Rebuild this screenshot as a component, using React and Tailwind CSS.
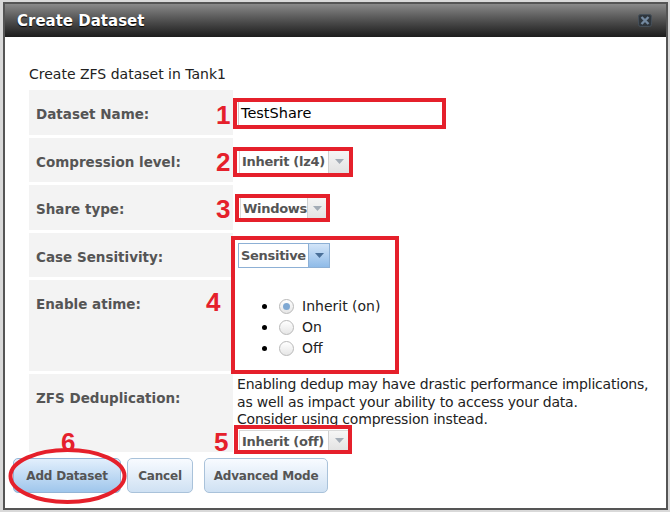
import React from 'react';

// Dropdown drawn the way the old dijit selects look
const Select = ({ value, className, active }) => (
  <div
    className={`flex h-[25px] items-stretch border bg-white ${className} ${
      active ? 'border-[#8db0d5]' : 'border-[#d9d9d9]'
    }`}
  >
    <span className="flex flex-1 items-center whitespace-nowrap pl-[2px] pt-[1px] text-[13px] font-bold tracking-[-0.3px] text-[#555]">
      {value}
    </span>
    <span
      className={`flex w-[21px] shrink-0 items-center justify-center border-l ${
        active
          ? 'border-[#8db0d5] bg-linear-to-b from-[#d3e5f8] to-[#8fbbe8]'
          : 'border-[#d0d0d0] bg-linear-to-b from-[#f6f6f6] to-[#e2e2e2]'
      }`}
    >
      <svg width="9" height="5" viewBox="0 0 9 5">
        <path d="M0 0h9L4.5 5z" fill={active ? '#4a6f98' : '#a3acb6'} />
      </svg>
    </span>
  </div>
);

const Radio = ({ checked }) => (
  <span className="flex h-[15px] w-[15px] items-center justify-center rounded-full border border-[#b9b9b9] bg-linear-to-b from-white to-[#e6e6e6]">
    {checked && <span className="h-[7px] w-[7px] rounded-full bg-[#7fa8d2]" />}
  </span>
);

const Label = ({ children }) => (
  <div className="whitespace-nowrap bg-[#f3f3f3] pl-[7px] pt-[14px] text-[13.5px] font-bold text-[#555]">
    {children}
  </div>
);

const Mark = ({ n, className }) => (
  <span
    className={`absolute text-[26px] font-bold leading-none text-[#e5202b] ${className}`}
    style={{ fontFamily: '"Liberation Sans", Arial, sans-serif' }}
  >
    {n}
  </span>
);

const btn =
  'h-[35px] rounded-[5px] border text-[12px] font-bold tracking-[-0.2px] text-[#555]';

const atimeOptions = [
  ['Inherit (on)', true],
  ['On', false],
  ['Off', false],
];

export default function App() {
  return (
    <div
      className="relative h-[512px] w-[670px] overflow-hidden bg-[#d9d9d9] pl-[3px] pt-[2px]"
      style={{ fontFamily: '"DejaVu Sans", Verdana, sans-serif' }}
    >
      <div className="flex h-[508px] w-[665px] flex-col border-2 border-[#555] bg-white">
        {/* Title bar */}
        <div className="flex h-[33px] shrink-0 items-center justify-between bg-linear-to-b from-[#8a8a8a] to-[#1d1d1d] pl-[12px] pr-[14px]">
          <span className="pt-[1px] text-[15px] font-bold text-white [text-shadow:0_1px_1px_#000]">
            Create Dataset
          </span>
          <svg width="14" height="13" viewBox="0 0 14 13">
            <rect x="0.5" y="0.5" width="13" height="12" rx="2" fill="#2f363d" stroke="#444e58" />
            <path d="M3.5 3l7 7M10.5 3l-7 7" stroke="#7489a0" strokeWidth="2.4" />
          </svg>
        </div>

        {/* Body */}
        <div className="flex flex-1 flex-col px-[8px] pt-[28px]">
          <div className="pl-[16px]">
            <p className="text-[14px] leading-[18px] text-[#222]">Create ZFS dataset in Tank1</p>

            <div className="mt-[7px] grid grid-cols-[204px_1fr] grid-rows-[45px_44px_45px_44px_91px_78px] gap-[3px]">
              <Label>Dataset Name:</Label>
              <div className="flex items-center pl-[2px] pt-[2px]">
                <div className="flex h-[25px] w-[205px] items-center border border-[#ccc] pl-[2px] text-[14.5px] text-black">
                  TestShare
                </div>
              </div>

              <Label>Compression level:</Label>
              <div className="flex items-center pl-[3px] pt-[3px]">
                <Select value="Inherit (lz4)" className="w-[111px]" />
              </div>

              <Label>Share type:</Label>
              <div className="flex items-center pl-[4px] pt-[2px]">
                <Select value="Windows" className="w-[86px]" />
              </div>

              <Label>Case Sensitivity:</Label>
              <div className="flex items-center pl-[2px]">
                <Select value="Sensitive" className="w-[92px]" active />
              </div>

              <Label>Enable atime:</Label>
              <div className="flex flex-col justify-center pl-[26px] pt-[4px] text-[14px] text-[#222]">
                {atimeOptions.map(([t, c]) => (
                  <div key={t} className="flex h-[21px] items-center">
                    <span className="h-[5px] w-[5px] rounded-full bg-black" />
                    <span className="ml-[12px] mr-[8px]">
                      <Radio checked={c} />
                    </span>
                    {t}
                  </div>
                ))}
              </div>

              <Label>ZFS Deduplication:</Label>
              <div className="flex flex-col pl-[1px] pt-[2px]">
                <p className="whitespace-nowrap text-[14px] leading-[17.5px] tracking-[-0.2px] text-[#222]">
                  Enabling dedup may have drastic performance implications,
                  <br />
                  as well as impact your ability to access your data.
                  <br />
                  Consider using compression instead.
                </p>
                <Select value="Inherit (off)" className="ml-[2px] mt-[1px] w-[111px]" />
              </div>
            </div>
          </div>

          {/* Buttons */}
          <div className="mt-[6px] flex gap-[6px]">
            <button className={`${btn} w-[108px] border-[#93b4d6] bg-linear-to-b from-[#e2effc] to-[#9fc6ec]`}>
              Add Dataset
            </button>
            <button className={`${btn} w-[66px] border-[#a9c2da] bg-linear-to-b from-[#f8fbff] to-[#cfe1f3]`}>
              Cancel
            </button>
            <button className={`${btn} ml-[5px] w-[124px] border-[#a9c2da] bg-linear-to-b from-[#f8fbff] to-[#cfe1f3]`}>
              Advanced Mode
            </button>
          </div>
        </div>
      </div>

      {/* Red annotations laid over the dialog */}
      <div className="pointer-events-none absolute left-[233px] top-[98px] h-[31px] w-[213px] border-4 border-[#e5202b]" />
      <div className="pointer-events-none absolute left-[233px] top-[147px] h-[30px] w-[120px] border-4 border-[#e5202b]" />
      <div className="pointer-events-none absolute left-[235px] top-[194px] h-[28px] w-[95px] border-4 border-[#e5202b]" />
      <div className="pointer-events-none absolute left-[231px] top-[236px] h-[138px] w-[168px] border-4 border-[#e5202b]" />
      <div className="pointer-events-none absolute left-[234px] top-[425px] h-[29px] w-[118px] border-4 border-[#e5202b]" />
      <svg className="pointer-events-none absolute left-0 top-0" width="670" height="512">
        <ellipse cx="67.5" cy="476" rx="57" ry="26" fill="none" stroke="#e5202b" strokeWidth="4" />
      </svg>
      <Mark n="1" className="left-[216px] top-[102px]" />
      <Mark n="2" className="left-[216px] top-[149px]" />
      <Mark n="3" className="left-[216px] top-[196px]" />
      <Mark n="4" className="left-[206px] top-[289px]" />
      <Mark n="5" className="left-[214px] top-[429px]" />
      <Mark n="6" className="left-[61px] top-[429px]" />
    </div>
  );
}
